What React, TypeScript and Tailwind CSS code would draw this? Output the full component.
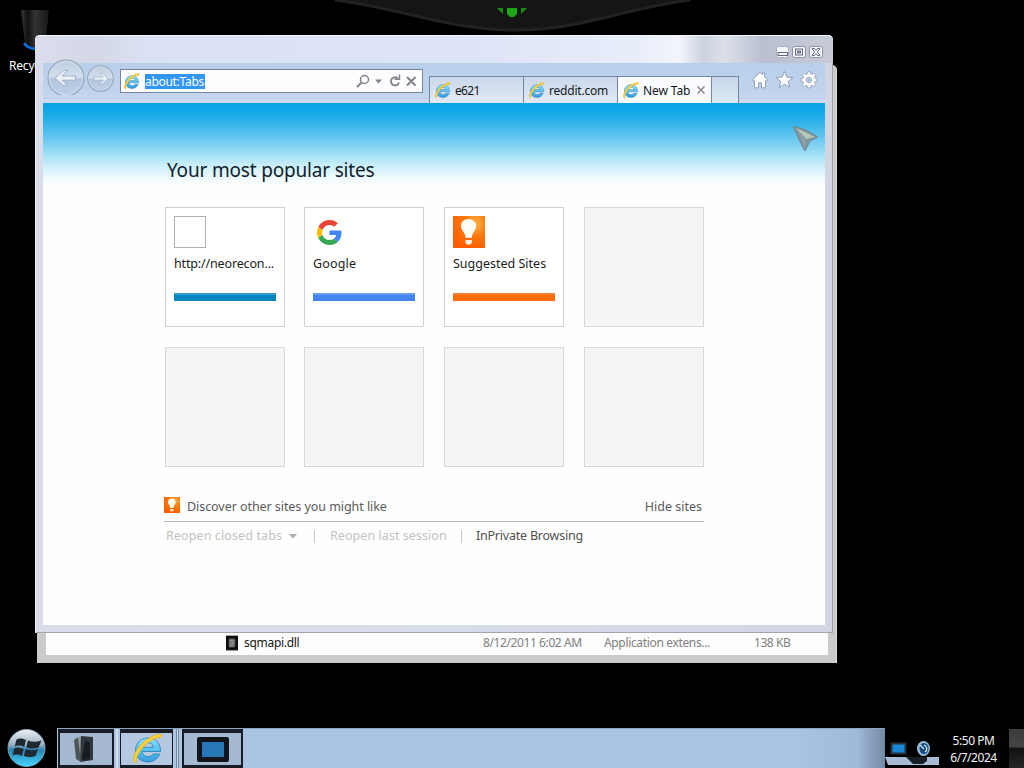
import { useState } from "react";
import { clsx } from "clsx";

const tabs = [
    { id: "e621", title: "e621", width: "w-[94px]", tracking: "tracking-[-0.7px]" },
    { id: "reddit", title: "reddit.com", width: "w-[94px]", tracking: "tracking-[-0.2px]" },
    { id: "new", title: "New Tab", width: "w-[94px]", tracking: "tracking-[-0.1px]" },
];

const sites = [
    { name: "http://neorecon...", kind: "blank", bar: "bg-[#0886c0] border-[#2f9acb]" },
    { name: "Google", kind: "google", bar: "bg-[#4285f0] border-[#6a9df0]" },
    { name: "Suggested Sites", kind: "bulb", bar: "bg-[#ff6c08] border-[#f5812f]" },
    null,
    null,
    null,
    null,
    null,
];

function IeIcon({ className }: { className?: string }) {
    return (
        <svg viewBox="0 0 32 32" className={className}>
            <defs>
                <linearGradient id="ie-blue" x1="0" y1="0" x2="0" y2="1">
                    <stop offset="0" stopColor="#8be4fb" />
                    <stop offset="0.5" stopColor="#56c3f0" />
                    <stop offset="1" stopColor="#3799dc" />
                </linearGradient>
            </defs>
            <path
                d="M29.500 18.500H11.200c.3 3.400 2.700 5.200 5.800 5.200 2.300 0 4.200-.9 5.300-2.700h6.400c-1.900 5.200-6.300 8-11.900 8C9.600 29 4.500 24.200 4.500 17.200S9.700 5 16.800 5c8 0 13 5.600 12.700 13.500zM11.300 14.300h11.200c-.4-2.900-2.600-4.600-5.500-4.600s-5.100 1.700-5.700 4.600z"
                fill="url(#ie-blue)"
                stroke="#3481bf"
                strokeWidth="0.9"
            />
            <path
                d="M4.300 30C.8 28 2.700 20 8.800 12.800 15.500 5 25.500.3 30.500 1.300c.5 1 .2 2.200-.6 3.200C25.500 3.900 17 8.500 11.300 15.200 6.600 20.800 4.600 26.500 5.700 28.800z"
                fill="#f8d23c"
                stroke="#dca823"
                strokeWidth="0.7"
            />
        </svg>
    );
}

function BulbIcon({ className }: { className?: string }) {
    return (
        <svg viewBox="0 0 32 32" className={className}>
            <defs>
                <radialGradient id="bulb-glow" cx="0.7" cy="0.25" r="0.8">
                    <stop offset="0" stopColor="#ffb347" />
                    <stop offset="0.5" stopColor="#f9780d" />
                    <stop offset="1" stopColor="#ff5d00" />
                </radialGradient>
            </defs>
            <rect width="32" height="32" fill="url(#bulb-glow)" />
            <path d="M15.500 3c-4.300 0-7.500 3-7.500 7 0 3.500 2.400 5.200 3.400 7.600.6 1.300.8 2.600 1 4.200h6.400c.2-1.600.4-2.900 1-4.200 1-2.400 3.400-4.100 3.400-7.600 0-4-3.300-7-7.700-7z" fill="#fffdf5" />
            <path d="M12.500 24h6.400v2.400l-1.300 2.100h-3.800l-1.300-2.100z" fill="#fff1df" />
        </svg>
    );
}

function GoogleIcon({ className }: { className?: string }) {
    return (
        <svg viewBox="0 0 48 48" className={className}>
            <path fill="#ea4335" d="M24 9.500c3.540 0 6.710 1.220 9.210 3.600l6.850-6.850C35.900 2.380 30.470 0 24 0 14.620 0 6.510 5.380 2.560 13.220l7.980 6.190C12.430 13.720 17.740 9.500 24 9.500z" />
            <path fill="#4285f4" d="M46.980 24.550c0-1.570-.15-3.090-.38-4.550H24v9.020h12.940c-.58 2.960-2.260 5.480-4.780 7.180l7.730 6c4.510-4.180 7.090-10.360 7.090-17.650z" />
            <path fill="#fbbc05" d="M10.530 28.590A14.500 14.500 0 0 1 9.770 24c0-1.600.27-3.140.76-4.590l-7.980-6.190A24 24 0 0 0 0 24c0 3.880.92 7.540 2.560 10.780z" />
            <path fill="#34a853" d="M24 48c6.480 0 11.930-2.130 15.890-5.810l-7.730-6c-2.150 1.450-4.920 2.300-8.160 2.300-6.260 0-11.570-4.220-13.470-9.910l-7.980 6.190C6.510 42.620 14.620 48 24 48z" />
        </svg>
    );
}

function NavArrow({ size, flip }: { size: number; flip?: boolean }) {
    const id = flip ? "nav-forward" : "nav-back";
    return (
        <svg width={size} height={size} viewBox="0 0 38 38" className={clsx(flip && "-scale-x-100")}>
            <defs>
                <linearGradient id={id} x1="0" y1="0" x2="0" y2="1">
                    <stop offset="0" stopColor="#bfcde0" />
                    <stop offset="0.48" stopColor="#d3dfee" />
                    <stop offset="0.52" stopColor="#b3c6de" />
                    <stop offset="1" stopColor="#bfd1ea" />
                </linearGradient>
            </defs>
            <circle cx="19" cy="19" r="18" fill={`url(#${id})`} stroke="#97a4b7" strokeWidth={flip ? 1.5 : 1.1} />
            <circle cx="19" cy="19" r="16.500" fill="none" stroke="#d3e0f0" strokeWidth="0.9" />
            <path d="M8 19l8.500-7.500h4l-5.500 5.500h13.500v4.200H15l5.500 5.500h-4z" fill="#e9f0f8" stroke="#9dacc1" strokeWidth="0.9" strokeLinejoin="round" />
        </svg>
    );
}

function AddressBar() {
    return (
        <div className="mt-[6px] ml-[5px] flex h-[24px] w-[303px] items-center border border-[#76859b] bg-[#fdfdff]">
            <IeIcon className="ml-[2px] size-[17px] shrink-0" />
            <span className="ml-[5px] flex h-[15px] w-[60px] items-center bg-[#3196f8] text-[12px] leading-[15px] tracking-[-0.3px] whitespace-nowrap text-white">
                about:Tabs
            </span>
            <svg viewBox="0 0 64 18" className="mr-[4px] ml-auto h-[18px] w-[64px]" fill="none" stroke="#808286">
                <circle cx="10.500" cy="7.500" r="4" strokeWidth="1.500" />
                <path d="M7.500 10.500L3 15" strokeWidth="2" />
                <path d="M21 7.500h7l-3.500 4z" fill="#808286" stroke="none" />
                <path d="M43.800 6.300A4.100 4.100 0 1 0 45 10.500" strokeWidth="1.800" />
                <path d="M40.500 7.200h5V2.500" strokeWidth="1.500" />
                <path d="M53 5l8.500 8.500M61.500 5l-8.500 8.500" strokeWidth="2" />
            </svg>
        </div>
    );
}

function CommandIcons() {
    return (
        <svg viewBox="0 0 70 20" className="mt-[7px] ml-[12px] h-[20px] w-[70px]" fill="#fff" stroke="#8b99b0" strokeWidth="0.9" strokeLinejoin="round">
            <path d="M1.500 10L9 2.200l2.500 2.500V3h2.200v4l3 3-1.200 1.300-1-.9v7.400h-4v-5h-3v5h-4v-7.400l-1 .9z" />
            <path d="M33.500 1.500l2.300 5.600 6 .5-4.600 3.900 1.500 5.900-5.200-3.200-5.200 3.200 1.500-5.900-4.600-3.900 6-.5z" />
            <g transform="translate(58 10) scale(.88)">
                <path d="M-1.500-8h3l.4 2.200 1.600.7 1.900-1.300 2.100 2.100-1.300 1.900.7 1.600 2.200.4v3l-2.200.4-.7 1.600 1.300 1.900-2.100 2.100-1.900-1.300-1.600.7-.4 2.200h-3l-.4-2.200-1.600-.7-1.900 1.300-2.100-2.100 1.300-1.900-.7-1.600-2.200-.4v-3l2.200-.4.7-1.600-1.300-1.900 2.100-2.100 1.900 1.300 1.600-.7z" transform="translate(0 -1.200)" />
                <circle r="3" fill="#c7d8ee" />
                <circle r="0.900" />
            </g>
        </svg>
    );
}

function CaptionButtons() {
    return (
        <svg viewBox="0 0 50 16" className="mt-[8px] mr-[9px] h-[16px] w-[50px]" fill="#f6f7fb" stroke="#656a82">
            <rect x="2.500" y="2.500" width="12" height="11" rx="2" stroke="#a9aec0" />
            <rect x="4" y="8.500" width="9.500" height="3" />
            <rect x="18.500" y="2.500" width="13" height="11" rx="2" stroke="#8b90a4" />
            <rect x="21.500" y="5" width="7" height="6" />
            <rect x="23.500" y="7" width="3" height="2" fill="#9499ab" />
            <rect x="35.500" y="2.500" width="13" height="11" rx="2" stroke="#8b90a4" />
            <path d="M38 4.500h2.500l1.500 2 1.500-2H46L43.500 8l2.500 3.500h-2.500l-1.500-2-1.500 2H38L40.500 8z" />
        </svg>
    );
}

function PopularSites() {
    return (
        <div className="flex h-[522px] w-[782px] flex-col bg-[#fefefe] bg-[linear-gradient(180deg,#05a3e5_0px,#1dade8_14px,#63c5ef_34px,#9cddf6_50px,#c9eefb_62px,#f0fbff_75px,#fefefe_84px)] pl-[122px]">
            <h1 className="mt-[54px] ml-[2px] h-[26px] text-[19px] leading-[26px] tracking-[-0.18px] whitespace-nowrap text-[#10212c]">Your most popular sites</h1>
            <div className="mt-[24px] grid grid-cols-[139px_140px_140px_120px] gap-y-[20px]">
                {sites.map((site, i) =>
                    site ? (
                        <div key={i} className="h-[120px] w-[120px] border border-[#d0d0d0] bg-white px-[8px] pt-[8px]">
                            {site.kind === "blank" && <div className="size-[32px] border border-[#b0b0b0]" />}
                            {site.kind === "google" && (
                                <div className="flex size-[32px] items-center justify-center">
                                    <GoogleIcon className="size-[25px]" />
                                </div>
                            )}
                            {site.kind === "bulb" && <BulbIcon className="size-[32px]" />}
                            <div
                                className={clsx(
                                    "mt-[7px] h-[18px] text-[12.5px] leading-[18px] whitespace-nowrap text-[#1c1c1c]",
                                    site.kind === "blank" && "tracking-[-0.15px]",
                                    site.kind === "google" && "tracking-[0.15px]"
                                )}
                            >
                                {site.name}
                            </div>
                            <div className={clsx("mt-[20px] h-[8px] w-[102px] border-t-2", site.bar)} />
                        </div>
                    ) : (
                        <div key={i} className="h-[120px] w-[120px] border border-[#d8d8d8] bg-[#f5f5f5]" />
                    )
                )}
            </div>
            <div className="mt-[29px] -ml-px flex h-[26px] w-[540px] border-b border-[#b9b9b9] text-[12.5px] leading-[22px] whitespace-nowrap text-[#5a5a5a]">
                <BulbIcon className="mt-[1px] size-[16px]" />
                <span className="ml-[7px] tracking-[-0.06px]">Discover other sites you might like</span>
                <span className="mr-[2px] ml-auto">Hide sites</span>
            </div>
            <div className="mt-[4px] ml-px flex h-[20px] items-center text-[12.5px] leading-[20px] whitespace-nowrap text-[#c3c3c3]">
                <span className="w-[117px] tracking-[0.11px]">Reopen closed tabs</span>
                <svg viewBox="0 0 8 5" className="ml-[6px] h-[5px] w-[8px]">
                    <path d="M0 0h8L4 4.500z" fill="#aaa" />
                </svg>
                <span className="ml-[17px] h-[13px] w-px bg-[#c8c8c8]" />
                <span className="ml-[15px] w-[117px] tracking-[0.06px]">Reopen last session</span>
                <span className="ml-[14px] h-[13px] w-px bg-[#c8c8c8]" />
                <span className="ml-[14px] tracking-[-0.22px] text-[#505050]">InPrivate Browsing</span>
            </div>
        </div>
    );
}

function BrowserWindow() {
    const [active, setActive] = useState("new");

    return (
        <div className="absolute top-[35px] left-[35px] h-[598px] w-[798px] rounded-t-[5px] bg-[linear-gradient(90deg,#dadcec,#d8ddec_50%,#d2d6e2)] shadow-[inset_1px_1px_0_#eceef5,inset_-1px_-1px_0_#a3a4ae]">
            <div className="flex h-[28px] justify-end rounded-t-[5px] border-t border-[#f4f6fc] bg-[linear-gradient(90deg,#dcdeed_0px,#d3d7e7_60px,#dbe1f4_110px,#dfe5f8_450px,#e8edfa_600px,#f3f5fb_645px,#ccd2e0_668px,#dce0e9_690px,#b9bfd1_728px,#c8cbd8_798px)]">
                <CaptionButtons />
            </div>
            <div className="mx-[8px] flex h-[40px] items-start bg-[linear-gradient(180deg,#b8cfea_0px,#c0d3ed_28px,#c6d7ee_34px,#b8c8de_35px,#cbdaf1_36px,#cbdaf1_40px)]">
                <div className="-mt-[4px] ml-[4px] h-[36px] w-[38px] overflow-hidden">
                    <NavArrow size={38} />
                </div>
                <div className="mt-[2px] ml-[2px] w-[28px]">
                    <NavArrow size={27} flip />
                </div>
                <AddressBar />
                <div className="mt-[13px] ml-[6px] flex h-[27px] border-t border-l border-[#7286a2]">
                    {tabs.map((tab) => (
                        <button
                            key={tab.id}
                            onClick={() => setActive(tab.id)}
                            className={clsx(
                                "flex items-center border-r border-[#7286a2] pl-[4px] text-left text-[12px] leading-[16px] whitespace-nowrap text-[#15181d]",
                                tab.width,
                                active === tab.id ? "bg-[#fafcff]" : "bg-linear-to-b from-[#cbd9ec] to-[#e0e9f6]"
                            )}
                        >
                            <IeIcon className="size-[17px] shrink-0" />
                            <span className={clsx("mt-[2px] ml-[4px]", tab.tracking)}>{tab.title}</span>
                            {active === tab.id && (
                                <svg viewBox="0 0 8 8" className="mr-[6px] ml-auto size-[8px]" stroke="#8a8a8a" strokeWidth="1.500">
                                    <path d="M0.500 0.500l7 7M7.500 0.500l-7 7" />
                                </svg>
                            )}
                        </button>
                    ))}
                    <div className="w-[27px] border-r border-[#7286a2] bg-linear-to-b from-[#c8d7e9] to-[#dce8f6]" />
                </div>
                <CommandIcons />
            </div>
            <div className="mx-[8px]">
                <PopularSites />
            </div>
        </div>
    );
}

function ExplorerWindow() {
    return (
        <div className="absolute top-[65px] left-[37px] flex h-[598px] w-[800px] flex-col rounded-tr-[5px] border-r border-[#dedede] bg-[#cbcbcb] pr-[8px] pl-[9px]">
            <div className="mt-[566px] flex h-[24px] items-center bg-[#fdfdfd] text-[12px] leading-[20px] whitespace-nowrap text-[#808080]">
                <svg viewBox="0 0 13 16" className="ml-[180px] h-[16px] w-[12px]">
                    <rect width="13" height="16" fill="#101010" />
                    <rect x="3" y="3" width="7" height="10" rx="2" fill="#686868" />
                    <path d="M4 5l5 1M4 8h5M4 11l4-1" stroke="#aaa" />
                </svg>
                <span className="ml-[6px] w-[239px] tracking-[-0.3px] text-[#151515]">sqmapi.dll</span>
                <span className="w-[121px] tracking-[-0.4px]">8/12/2011 6:02 AM</span>
                <span className="w-[150px] tracking-[-0.34px]">Application extens...</span>
                <span className="tracking-[-0.45px]">138 KB</span>
            </div>
        </div>
    );
}

function Taskbar() {
    return (
        <div className="absolute bottom-0 left-0 flex h-[40px] w-full">
            <svg viewBox="0 0 57 40" className="h-[40px] w-[57px]">
                <defs>
                    <linearGradient id="orb" x1="0" y1="0" x2="0" y2="1">
                        <stop offset="0" stopColor="#eef1f4" />
                        <stop offset="0.4" stopColor="#9db4c4" />
                        <stop offset="0.55" stopColor="#2b83b4" />
                        <stop offset="1" stopColor="#42d4ff" />
                    </linearGradient>
                </defs>
                <circle cx="26.500" cy="20" r="18.500" fill="url(#orb)" stroke="#8fb9cc" strokeWidth="0.8" />
                <path d="M16.500 11.500c3.500-1.700 6.500-1 9.500.5L24.200 19c-3-1.600-6-2-9.500-.5zM28 12.500c3.500 1.500 8 1.700 13.500 0L38.500 19.500c-5 1.700-9 1.200-12.200-.3zM14.200 20.500c3.500-1.500 6.500-1 9.500.5L21.900 28c-3-1.600-6-2-9.500-.5zM25.800 21c3.500 1.500 8 1.700 12.200 0L35.500 28c-4 1.700-8.500 1.200-11.700-.3z" fill="#202830" />
            </svg>
            <div className="flex h-[40px] w-[828px] border-t border-[#8ea5c2] bg-[linear-gradient(90deg,#adc5e3_0px,#a9c3e3_740px,#a0b9d8_800px,#738aa7_828px)]">
                <div className="ml-px flex h-[39px] w-[56px] items-center justify-center border-x-2 border-t-4 border-b-3 border-[#181d25] bg-[#a5b9d2] pr-[4px]">
                    <svg viewBox="0 0 26 28" className="h-[28px] w-[26px]">
                        <path d="M4 3l7-2v26l-5-3z" fill="#8e9a9b" />
                        <path d="M10 1l12 1v23l-13 2z" fill="#30383c" />
                        <path d="M14 6l5 1v17l-8 1z" fill="#161c20" />
                        <path d="M3 5l4-2 3 24-5-3z" fill="#4c5557" />
                    </svg>
                </div>
                <div className="mx-[2px] w-[2px] bg-[#d1deed]" />
                <div className="flex h-[39px] w-[53px] items-center justify-center border-x border-t-4 border-b-3 border-[#181d25] bg-[#b4c8e1]">
                    <IeIcon className="size-[32px]" />
                </div>
                <div className="mx-[3px] w-[3px] border-x border-[#71869f] bg-[#d1deed]" />
                <div className="flex h-[39px] w-[61px] items-center justify-center border-x-2 border-t-4 border-b-3 border-[#181d25] bg-[#a5b9d2]">
                    <div className="h-[25px] w-[32px] rounded-[2px] border-[5px] border-[#11151b] bg-[#2877b8]" />
                </div>
            </div>
            <svg viewBox="0 0 54 40" className="h-[40px] w-[54px]">
                <path d="M0 29h54v8H3z" fill="#a7bbd4" />
                <path d="M21 29h21v4l-4 3H28z" fill="#171d25" />
                <rect x="6.500" y="15.500" width="14" height="10" fill="#1687d0" stroke="#26313b" strokeWidth="2" />
                <ellipse cx="38.500" cy="20.500" rx="6.500" ry="7.500" fill="#96bad4" />
                <ellipse cx="39" cy="20.500" rx="4.500" ry="5.500" fill="#184b7d" />
                <path d="M35 17l4 4M39 17c3 1 4 5 1 7" fill="none" stroke="#c9e4f4" strokeWidth="1.300" />
            </svg>
            <div className="w-[69px] pt-[4px] text-center text-[12px] leading-[17px] tracking-[-0.45px] text-[#f4f4f4]">
                <div>5:50 PM</div>
                <div>6/7/2024</div>
            </div>
            <div className="mt-[1px] ml-[1px] flex-1 bg-[linear-gradient(180deg,#3b3b3b_0px,#454545_18px,#101010_19px,#272727_39px)]" />
        </div>
    );
}

export default function App() {
    return (
        <main className="relative h-[768px] w-[1024px] overflow-hidden bg-black font-['Noto_Sans',sans-serif]">
            {/* wallpaper */}
            <svg viewBox="0 0 1024 40" className="absolute top-0 left-0 h-[40px] w-[1024px]">
                <path d="M335 0C405 9 445 29 512 30S620 9 690 0z" fill="#151515" />
                <path d="M335 0C405 9 445 29 512 30S620 9 690 0" fill="none" stroke="#222" strokeWidth="3" />
                <path d="M497 8h6v6zM521 14V8h6z" fill="#198c19" />
                <path d="M507 8h10v6l-3 3h-4l-3-3z" fill="#20a515" />
            </svg>

            <div className="absolute top-[9px] left-[9px] w-[70px] text-[12px] leading-[16px] tracking-[-0.2px] whitespace-nowrap text-white">
                <svg viewBox="0 0 28 44" className="ml-[12px] h-[44px] w-[28px]">
                    <defs>
                        <linearGradient id="bin">
                            <stop offset="0" stopColor="#373737" />
                            <stop offset="0.25" stopColor="#111" />
                            <stop offset="0.5" stopColor="#333" />
                            <stop offset="1" stopColor="#171717" />
                        </linearGradient>
                    </defs>
                    <path d="M0 1h28l-4 38c-8 3-16 1-20-4z" fill="url(#bin)" />
                    <path d="M3 34c4 6 10 7 20 5" fill="none" stroke="#1270e4" strokeWidth="2.500" />
                </svg>
                <div className="mt-[5px]">Recycle Bin</div>
            </div>

            <ExplorerWindow />
            <BrowserWindow />

            {/* mouse pointer */}
            <svg viewBox="0 0 28 28" className="absolute top-[124px] left-[791px] size-[28px]">
                <path d="M2 2l13 4 12 7-8 4-5 10-5-9z" fill="#81959b" stroke="#6d858e" strokeWidth="0.800" />
                <path d="M5 4l9 4 10 5-9 2z" fill="#b5c7b9" />
                <path d="M5 4l10 11-1 9z" fill="#8ba0a8" />
            </svg>

            <Taskbar />
        </main>
    );
}
